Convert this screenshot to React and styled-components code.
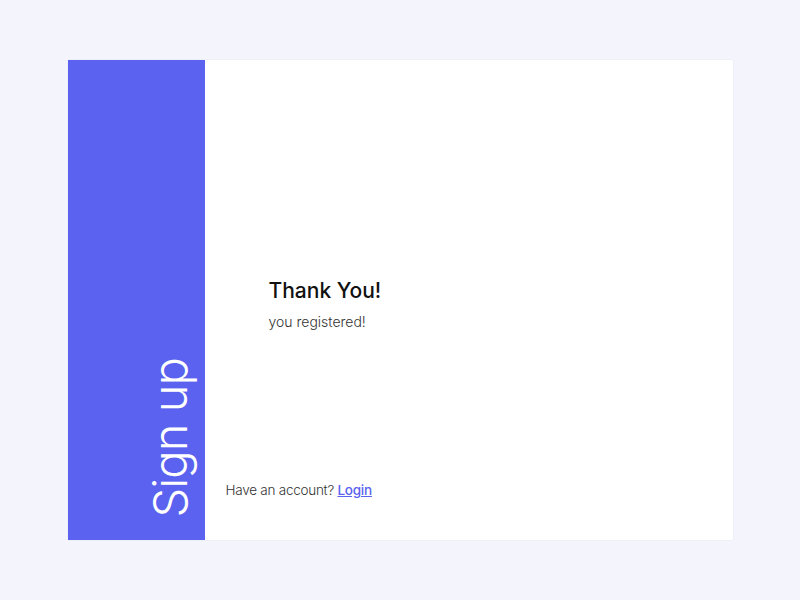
import React from "react";
import styled, { createGlobalStyle } from "styled-components";

const GlobalStyle = createGlobalStyle`
  html, body {
    margin: 0;
    padding: 0;
    height: 100%;
  }
  body {
    background: #f3f4fc;
    font-family: Inter, "Open Sans", sans-serif;
    color: #222;
  }
  #root {
    height: 100%;
  }
`;

const Page = styled.div`
  height: 100vh;
  display: flex;
  align-items: center;
  justify-content: center;
`;

const Card = styled.div`
  width: 665px;
  height: 480px;
  display: flex;
  background: #fff;
  box-shadow: 0 0 1px rgba(60, 64, 140, 0.18);
`;

const SidePanel = styled.div`
  width: 137px;
  background: #5a62ef;
  display: flex;
  align-items: flex-end;
  justify-content: flex-end;
  padding: 0 12px 22px 0;
  box-sizing: border-box;
`;

const SideTitle = styled.h1`
  margin: 0;
  writing-mode: vertical-rl;
  transform: rotate(180deg);
  color: #fff;
  font-family: Inter, "Open Sans", sans-serif;
  font-weight: 300;
  font-size: 47px;
  line-height: 1;
  letter-spacing: -0.9px;
  white-space: nowrap;
`;

const Content = styled.div`
  flex: 1;
  display: flex;
  flex-direction: column;
`;

const Message = styled.div`
  padding: 218px 0 0 64px;
`;

const Heading = styled.h2`
  margin: 0 0 8px;
  font-size: 21px;
  font-weight: 500;
  line-height: 26px;
  color: #111;
`;

const Note = styled.p`
  margin: 0;
  font-size: 14px;
  font-weight: 300;
  line-height: 20px;
  color: #333;
`;

const Footer = styled.p`
  margin: auto 0 0;
  padding: 0 0 40px 21px;
  font-size: 13.5px;
  font-weight: 300;
  line-height: 20px;
  letter-spacing: -0.25px;
  color: #333;
`;

const LoginLink = styled.a`
  color: #5a62ef;
  font-weight: 500;
  text-decoration: underline;
`;

export default function App() {
  return (
    <>
      <GlobalStyle />
      <Page>
        <Card>
          <SidePanel>
            <SideTitle>Sign up</SideTitle>
          </SidePanel>
          <Content>
            <Message>
              <Heading>Thank You!</Heading>
              <Note>you registered!</Note>
            </Message>
            <Footer>
              Have an account? <LoginLink href="#">Login</LoginLink>
            </Footer>
          </Content>
        </Card>
      </Page>
    </>
  );
}
